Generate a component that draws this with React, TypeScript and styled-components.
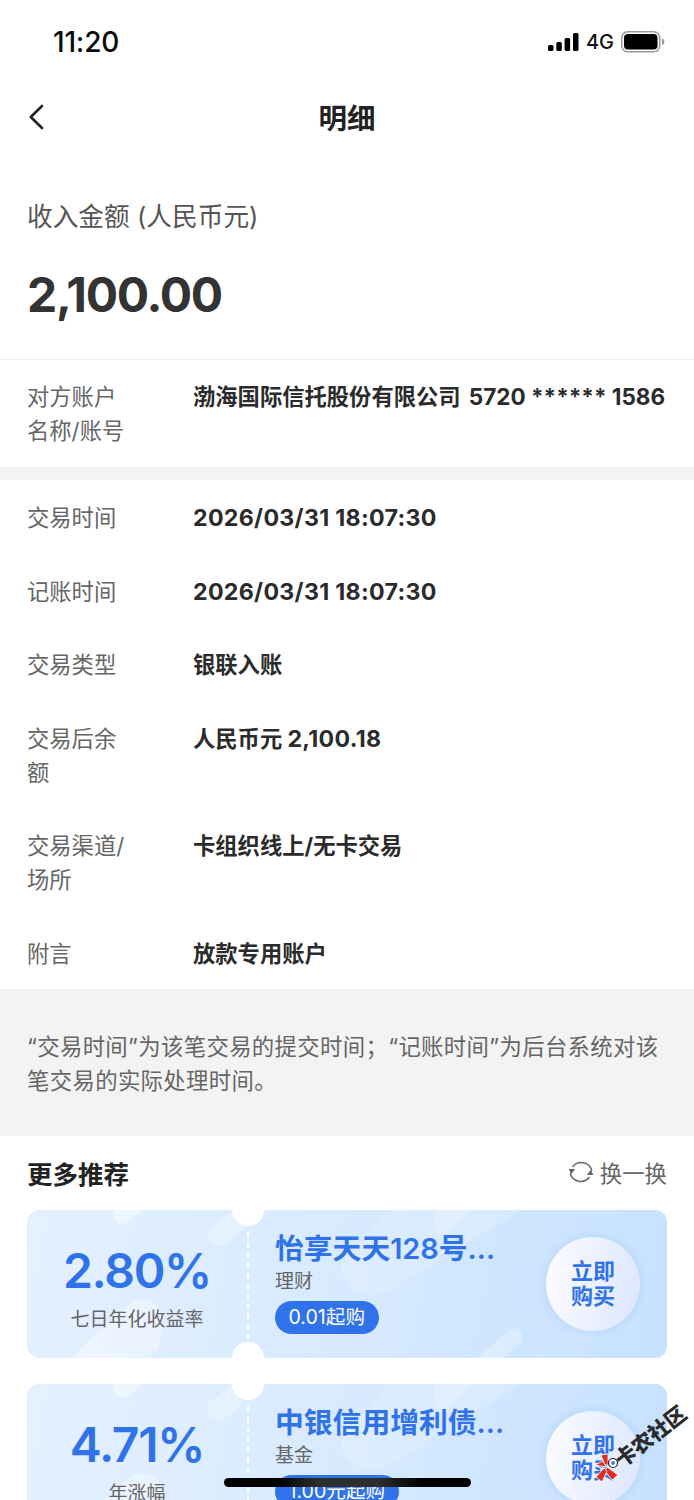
import React from 'react';
import styled, { createGlobalStyle } from 'styled-components';

const GlobalStyle = createGlobalStyle`
  html, body {
    margin: 0;
    padding: 0;
    background: #fff;
  }
  body {
    font-family: 'Inter', 'Noto Sans CJK SC', sans-serif;
  }
`;

const Page = styled.div`
  position: relative;
  width: 694px;
  height: 1500px;
  overflow: hidden;
  background: #fff;
`;

const StatusBar = styled.div`
  display: flex;
  align-items: center;
  justify-content: space-between;
  height: 82px;
  padding: 2px 29px 0 53px;
  box-sizing: border-box;
`;

const Time = styled.span`
  font-size: 28px;
  font-weight: 500;
  color: #0a0a0a;
  letter-spacing: -0.2px;
`;

const StatusIcons = styled.div`
  display: flex;
  align-items: center;
  gap: 7px;
`;

const Network = styled.span`
  font-size: 20px;
  font-weight: 500;
  color: #111;
`;

const Header = styled.div`
  position: relative;
  display: flex;
  align-items: center;
  justify-content: center;
  height: 72px;
  padding-bottom: 4px;
  box-sizing: border-box;
`;

const BackButton = styled.svg`
  position: absolute;
  left: 27px;
  top: 21px;
`;

const Title = styled.h1`
  margin: 0;
  font-size: 28.5px;
  font-weight: 700;
  color: #222;
`;

const Summary = styled.section`
  padding: 45px 27px 0;
  height: 206px;
  box-sizing: border-box;
  border-bottom: 1px solid #eee;
`;

const SummaryLabel = styled.div`
  font-size: 25.7px;
  line-height: 36px;
  color: #555;
`;

const Amount = styled.div`
  margin-top: 31px;
  font-size: 48px;
  line-height: 58px;
  font-weight: 700;
  letter-spacing: -1.3px;
  color: #333;
`;

const Section = styled.section<{ $pad: number; $end: number }>`
  display: flex;
  flex-direction: column;
  gap: 39.5px;
  padding: ${(p) => p.$pad}px 27px ${(p) => p.$end}px;
`;

const Row = styled.div`
  display: grid;
  grid-template-columns: 100px 1fr;
  column-gap: 66px;
  font-size: 22.3px;
  line-height: 34px;
`;

const RowLabel = styled.div`
  color: #666;
`;

const RowValue = styled.div`
  font-weight: 700;
  color: #2b2b2b;
  white-space: nowrap;
`;

const Digits = styled.span<{ $wide?: boolean }>`
  font-size: ${(p) => (p.$wide ? 23.2 : 22.5)}px;
  letter-spacing: ${(p) => (p.$wide ? 0.3 : 0)}px;
  margin-left: ${(p) => (p.$wide ? 0 : 3)}px;
`;

const Band = styled.div`
  height: 13px;
  background: #f3f3f3;
`;

const Note = styled.div`
  padding: 41px 27px 38px;
  background: #f3f3f3;
  font-size: 22.4px;
  line-height: 34px;
  letter-spacing: 0.33px;
  color: #666;
`;

const More = styled.section`
  padding: 18px 27px 0;
`;

const MoreHead = styled.div`
  display: flex;
  align-items: center;
  justify-content: space-between;
  height: 37px;
  margin-bottom: 19px;
`;

const MoreTitle = styled.h2`
  margin: 0;
  font-size: 25.5px;
  font-weight: 700;
  color: #222;
`;

const Refresh = styled.div`
  display: flex;
  align-items: center;
  gap: 6px;
  font-size: 22.4px;
  color: #666;
`;

const Cards = styled.div`
  display: flex;
  flex-direction: column;
  gap: 26px;
`;

const Card = styled.article`
  position: relative;
  display: grid;
  grid-template-columns: 222px 1fr 121px;
  height: 148px;
  border-radius: 12px;
  overflow: hidden;
  background: linear-gradient(100deg, #e4f1ff 0%, #d6e9ff 55%, #c6e1ff 100%);

  &::before,
  &::after {
    content: '';
    position: absolute;
    left: 205px;
    width: 32px;
    height: 32px;
    border-radius: 50%;
    background: #fff;
  }
  &::before {
    top: -16px;
  }
  &::after {
    bottom: -16px;
  }
`;

const Decor = styled.svg`
  position: absolute;
  inset: 0;
`;

const Rate = styled.div`
  position: relative;
  display: flex;
  flex-direction: column;
  align-items: center;
  border-right: 2px dashed rgba(255, 255, 255, 0.9);
  margin: 22px 0 18px;
  padding-top: 9px;
`;

const RateValue = styled.div`
  font-size: 48px;
  line-height: 60px;
  font-weight: 600;
  letter-spacing: -1.3px;
  color: #2f72ea;
`;

const RateLabel = styled.div`
  margin-top: 6px;
  font-size: 19px;
  line-height: 26px;
  color: #666;
`;

const Product = styled.div`
  position: relative;
  padding: 20px 0 0 26px;
`;

const ProductName = styled.div`
  font-size: 28.8px;
  line-height: 38px;
  font-weight: 600;
  color: #2f72ea;
  white-space: nowrap;
`;

const ProductType = styled.div`
  font-size: 19px;
  line-height: 28px;
  color: #666;
`;

const Pill = styled.span`
  display: inline-block;
  margin-top: 5px;
  padding: 0 13.5px;
  height: 33px;
  line-height: 33px;
  border-radius: 17px;
  background: #2f72ea;
  color: #fff;
  font-size: 19.6px;
`;

const BuySlot = styled.div`
  position: relative;
  display: flex;
  align-items: center;
`;

const BuyButton = styled.div`
  display: flex;
  align-items: center;
  justify-content: center;
  width: 94px;
  height: 94px;
  border-radius: 50%;
  background: linear-gradient(100deg, #fdfdff 0%, #dbe5ff 100%);
  box-shadow: 0 0 8px rgba(120, 165, 240, 0.3);
  font-size: 22px;
  line-height: 25px;
  font-weight: 700;
  color: #2f72ea;
  text-align: center;
`;

const HomeIndicator = styled.div`
  position: absolute;
  left: 224px;
  top: 1478px;
  width: 247px;
  height: 9px;
  border-radius: 5px;
  background: linear-gradient(90deg, #000 0%, #000 22%, #2e2e2e 38%, #2e2e2e 62%, #000 80%, #000 100%);
`;

const Watermark = styled.div`
  position: absolute;
  left: 590px;
  top: 1405px;
  width: 104px;
  height: 80px;
`;

const WatermarkText = styled.span`
  position: absolute;
  left: 19px;
  top: 20px;
  font-size: 21px;
  line-height: 24px;
  font-weight: 900;
  white-space: nowrap;
  color: #2a2a2a;
  transform: rotate(-38deg);
`;

const WatermarkIcon = styled.svg`
  position: absolute;
  left: 3px;
  top: 48px;
`;

const rows: { label: string; value: React.ReactNode }[] = [
  { label: '交易时间', value: <Digits $wide>2026/03/31 18:07:30</Digits> },
  { label: '记账时间', value: <Digits $wide>2026/03/31 18:07:30</Digits> },
  { label: '交易类型', value: '银联入账' },
  { label: '交易后余额', value: <>人民币元 <Digits $wide>2,100.18</Digits></> },
  { label: '交易渠道/场所', value: '卡组织线上/无卡交易' },
  { label: '附言', value: '放款专用账户' },
];

const products = [
  { rate: '2.80%', rateLabel: '七日年化收益率', name: '怡享天天128号...', type: '理财', from: '0.01起购' },
  { rate: '4.71%', rateLabel: '年涨幅', name: '中银信用增利债...', type: '基金', from: '1.00元起购' },
];

const App: React.FC = () => {
  return (
    <Page>
      <GlobalStyle />
      <StatusBar>
        <Time>11:20</Time>
        <StatusIcons>
          <svg width="31" height="18" viewBox="0 0 31 18" fill="#000">
            <rect x="0" y="12" width="5.5" height="6" rx="1.5" />
            <rect x="8.3" y="9" width="5.5" height="9" rx="1.5" />
            <rect x="16.6" y="5" width="5.5" height="13" rx="1.5" />
            <rect x="25" y="0" width="5.5" height="18" rx="1.5" />
          </svg>
          <Network>4G</Network>
          <svg width="44" height="22" viewBox="0 0 44 22">
            <rect x="0.75" y="0.75" width="38" height="20" rx="6" fill="none" stroke="#999" strokeWidth="1.5" />
            <rect x="3" y="3" width="33.5" height="15.5" rx="4" fill="#000" />
            <path d="M41 7.5c1.6.5 2.5 1.8 2.5 3.2s-.9 2.7-2.5 3.2z" fill="#999" />
          </svg>
        </StatusIcons>
      </StatusBar>

      <Header>
        <BackButton width="20" height="28" viewBox="0 0 20 28" fill="none">
          <path d="M15 3 3.8 14 15 25" stroke="#222" strokeWidth="2.6" strokeLinecap="round" strokeLinejoin="round" />
        </BackButton>
        <Title>明细</Title>
      </Header>

      <Summary>
        <SummaryLabel>收入金额 (人民币元)</SummaryLabel>
        <Amount>2,100.00</Amount>
      </Summary>

      <Section $pad={20} $end={19}>
        <Row>
          <RowLabel>对方账户名称/账号</RowLabel>
          <RowValue>渤海国际信托股份有限公司 <Digits>5720 ****** 1586</Digits></RowValue>
        </Row>
      </Section>
      <Band />
      <Section $pad={21} $end={18}>
        {rows.map((row) => (
          <Row key={row.label}>
            <RowLabel>{row.label}</RowLabel>
            <RowValue>{row.value}</RowValue>
          </Row>
        ))}
      </Section>

      <Note>“交易时间”为该笔交易的提交时间；“记账时间”为后台系统对该笔交易的实际处理时间。</Note>

      <More>
        <MoreHead>
          <MoreTitle>更多推荐</MoreTitle>
          <Refresh>
            <svg width="26" height="26" viewBox="0 0 26 26" fill="none">
              <path d="M4.5 8A11 11 0 0 1 23.8 11.5" stroke="#666" strokeWidth="1.5" />
              <path d="M21.5 18A11 11 0 0 1 2.2 14.5" stroke="#666" strokeWidth="1.5" />
              <path d="M0.8 10 7.2 10 3 15.5z" fill="#666" />
              <path d="M25.2 16 18.8 16l4.2-5.5z" fill="#666" />
            </svg>
            换一换
          </Refresh>
        </MoreHead>
        <Cards>
          {products.map((item) => (
            <Card key={item.name}>
              <Decor width="640" height="148" viewBox="0 0 640 148" fill="none">
                <path d="M87 0h29L101 12c-5 3-10 2-13-2-2-3-2-7-1-10z" fill="#fff" fillOpacity="0.45" />
                <path d="M206 0h30L200 33c-6 5-14 3-18-3-3-5-2-10 2-14z" fill="#fff" fillOpacity="0.25" />
                <path d="M43 148 102 94c12-11 34-3 34 20 0 14-5 26-13 34z" fill="#fff" fillOpacity="0.35" />
                <path d="M363 0 318 48c-8 14 0 30 14 35 12 4 24 2 36-6L495 0z" fill="#fff" fillOpacity="0.16" />
                <path d="M408 0c-4 12 0 22 8 28L446 0z" fill="#fff" fillOpacity="0.18" />
                <path d="M450 148 482 120c8-5 16 2 12 12l-16 16z" fill="#fff" fillOpacity="0.28" />
                <path d="M500 148 570 100v18c0 12-10 22-22 30z" fill="#fff" fillOpacity="0.08" />
              </Decor>
              <Rate>
                <RateValue>{item.rate}</RateValue>
                <RateLabel>{item.rateLabel}</RateLabel>
              </Rate>
              <Product>
                <ProductName>{item.name}</ProductName>
                <ProductType>{item.type}</ProductType>
                <Pill>{item.from}</Pill>
              </Product>
              <BuySlot>
                <BuyButton>
                  立即
                  <br />
                  购买
                </BuyButton>
              </BuySlot>
            </Card>
          ))}
        </Cards>
      </More>

      <HomeIndicator />
      <Watermark>
        <WatermarkIcon width="30" height="30" viewBox="0 0 30 30">
          <path d="M2 12 10 8 13 14z" fill="#e32a1e" stroke="#fff" strokeWidth="0.8" />
          <path d="M8 2 15 1 15 12 12 12z" fill="#e32a1e" stroke="#fff" strokeWidth="0.8" />
          <path d="M14 14 25 22 19 27 12 18z" fill="#e32a1e" stroke="#fff" strokeWidth="0.8" />
          <path d="M11 15 14 18 9 29 3 24z" fill="#e32a1e" stroke="#fff" strokeWidth="0.8" />
          <circle cx="20" cy="10" r="4.5" fill="#fff" stroke="#222" strokeWidth="1.2" />
          <circle cx="20" cy="10" r="2" fill="#3f80ea" />
        </WatermarkIcon>
        <WatermarkText>卡农社区</WatermarkText>
      </Watermark>
    </Page>
  );
};

export default App;
